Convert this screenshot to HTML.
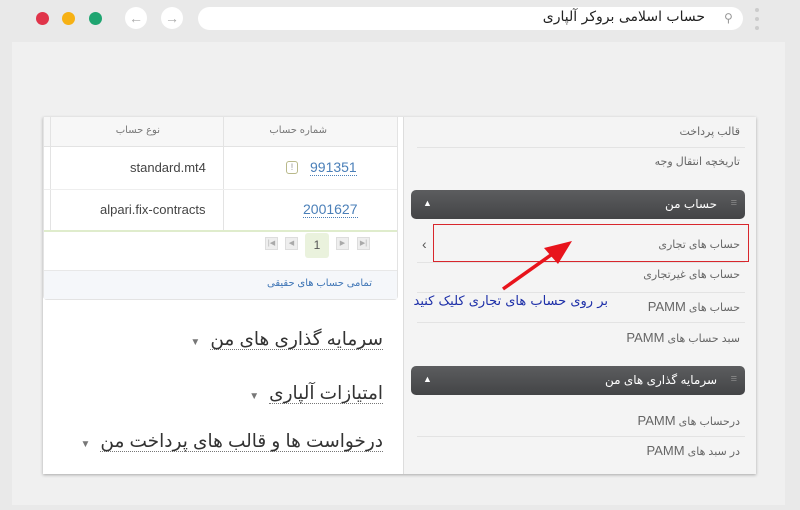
<!DOCTYPE html>
<html><head><meta charset="utf-8"><style>
*{margin:0;padding:0;box-sizing:border-box}
body{width:800px;height:510px;background:#e9e9e9;font-family:"Liberation Sans","DejaVu Sans",sans-serif;position:relative;overflow:hidden}
.a{position:absolute}
.dot{width:13px;height:13px;border-radius:50%;top:12px}
.circ{width:22px;height:22px;border-radius:50%;background:#fff;top:7px;color:#aaa;font-size:14px;text-align:center;line-height:22px}
.rt{direction:rtl;text-align:right;white-space:nowrap}
.item{right:60px;font-size:11px;color:#666}
.sep{left:417px;width:328px;height:1px;background:#e3e3e3}
.bar{left:411px;width:334px;height:29px;background:linear-gradient(#5c5d5f,#434446);border-radius:5px;color:#fff;font-size:12px}
.h{font-size:18.5px;color:#333;line-height:22px}
.h u{text-decoration:none;border-bottom:1px dotted #777}
.tri{font-size:10px;color:#777;margin-right:10px}
</style></head><body>
<div class="a dot" style="left:36px;background:#e0344a"></div>
<div class="a dot" style="left:62px;background:#f6b114"></div>
<div class="a dot" style="left:89px;background:#1fa571"></div>
<div class="a circ" style="left:125px">&#8592;</div>
<div class="a circ" style="left:161px">&#8594;</div>
<div class="a" style="left:198px;top:7px;width:545px;height:23px;background:#fff;border-radius:12px"></div>
<div class="a rt" style="right:95px;top:9px;font-size:14px;color:#222;font-family:'DejaVu Sans',sans-serif">حساب اسلامی بروکر آلپاری</div>
<div class="a" style="left:724px;top:11px;font-size:12px;color:#999">&#9906;</div>
<div class="a" style="left:755px;top:8px;width:4px;height:4px;border-radius:50%;background:#ccc"></div>
<div class="a" style="left:755px;top:17px;width:4px;height:4px;border-radius:50%;background:#ccc"></div>
<div class="a" style="left:755px;top:26px;width:4px;height:4px;border-radius:50%;background:#ccc"></div>
<div class="a" style="left:12px;top:42px;width:773px;height:463px;background:#f0f0f0"></div>
<div class="a" style="left:43px;top:117px;width:713px;height:357px;background:#fff;box-shadow:0 1px 3px rgba(0,0,0,.3)"></div>
<div class="a" style="left:403px;top:117px;width:353px;height:357px;background:#f4f4f4;border-left:1px solid #ddd"></div>
<div class="a" style="left:43px;top:117px;width:355px;height:183px;border:1px solid #e3e3e3;border-top:none;border-radius:0 0 4px 4px;background:#fff"></div>
<div class="a" style="left:44px;top:117px;width:353px;height:30px;background:#f7f7f7;border-bottom:1px solid #e3e3e3"></div>
<div class="a" style="left:50px;top:117px;width:1px;height:113px;background:#e3e3e3"></div>
<div class="a" style="left:223px;top:117px;width:1px;height:113px;background:#e3e3e3"></div>
<div class="a rt" style="right:473px;top:125px;font-size:10px;color:#777">شماره حساب</div>
<div class="a rt" style="right:640px;top:125px;font-size:10px;color:#777">نوع حساب</div>
<div class="a" style="left:44px;top:189px;width:353px;height:1px;background:#eee"></div>
<div class="a" style="left:44px;top:230px;width:353px;height:2px;background:#dfeccc"></div>
<div class="a" style="left:310px;top:159px;font-size:14px;color:#4a7fb8;border-bottom:1px dotted #4a7fb8">991351</div>
<div class="a" style="left:286px;top:161px;width:12px;height:13px;border:1px solid #b9b98a;border-radius:3px;font-size:9px;color:#999;text-align:center;line-height:11px">!</div>
<div class="a" style="left:303px;top:201px;font-size:14px;color:#4a7fb8;border-bottom:1px dotted #4a7fb8">2001627</div>
<div class="a" style="left:130px;top:160px;font-size:13px;color:#444">standard.mt4</div>
<div class="a" style="left:100px;top:202px;font-size:13px;color:#444">alpari.fix-contracts</div>
<div class="a" style="left:265px;top:237px;width:13px;height:13px;background:#eee;border:1px solid #ddd;font-size:7px;color:#aaa;text-align:center;line-height:11px">|◀</div>
<div class="a" style="left:285px;top:237px;width:13px;height:13px;background:#eee;border:1px solid #ddd;font-size:7px;color:#aaa;text-align:center;line-height:11px">◀</div>
<div class="a" style="left:305px;top:233px;width:24px;height:25px;background:#eaf2dd;border-radius:3px;font-size:12px;color:#555;text-align:center;line-height:25px">1</div>
<div class="a" style="left:336px;top:237px;width:13px;height:13px;background:#eee;border:1px solid #ddd;font-size:7px;color:#aaa;text-align:center;line-height:11px">▶</div>
<div class="a" style="left:357px;top:237px;width:13px;height:13px;background:#eee;border:1px solid #ddd;font-size:7px;color:#aaa;text-align:center;line-height:11px">▶|</div>
<div class="a" style="left:44px;top:270px;width:353px;height:29px;background:#f5f7fa;border-top:1px solid #e8e8e8"></div>
<div class="a rt" style="right:428px;top:278px;font-size:10px;color:#3d74b5">تمامی حساب های حقیقی</div>
<div class="a rt h" style="right:417px;top:328px"><u>سرمایه گذاری های من</u><span class="tri">▼</span></div>
<div class="a rt h" style="right:417px;top:382px"><u>امتیازات آلپاری</u><span class="tri">▼</span></div>
<div class="a rt h" style="right:417px;top:430px"><u>درخواست ها و قالب های پرداخت من</u><span class="tri">▼</span></div>
<div class="a rt item" style="top:125px">قالب پرداخت</div>
<div class="a sep" style="top:147px"></div>
<div class="a rt item" style="top:155px">تاریخچه انتقال وجه</div>
<div class="a bar" style="top:190px"><span class="a" style="left:12px;top:8px;font-size:9px">▲</span><span class="a rt" style="right:28px;top:7px">حساب من</span><span class="a" style="right:8px;top:7px;color:#888;font-size:11px">≡</span></div>
<div class="a rt item" style="top:238px">حساب های تجاری</div>
<div class="a" style="left:422px;top:236px;font-size:14px;color:#555">‹</div>
<div class="a" style="left:433px;top:224px;width:316px;height:38px;border:1.5px solid #d8262c"></div>
<div class="a sep" style="top:262px"></div>
<div class="a rt item" style="top:268px">حساب های غیرتجاری</div>
<div class="a sep" style="top:292px"></div>
<div class="a rt item" style="top:299px">حساب های <span style="font-size:13px">PAMM</span></div>
<div class="a sep" style="top:322px"></div>
<div class="a rt item" style="top:330px">سبد حساب های <span style="font-size:13px">PAMM</span></div>
<div class="a bar" style="top:366px"><span class="a" style="left:12px;top:8px;font-size:9px">▲</span><span class="a rt" style="right:28px;top:7px">سرمایه گذاری های من</span><span class="a" style="right:8px;top:7px;color:#888;font-size:11px">≡</span></div>
<div class="a rt item" style="top:413px">درحساب های <span style="font-size:13px">PAMM</span></div>
<div class="a sep" style="top:436px"></div>
<div class="a rt item" style="top:443px">در سبد های <span style="font-size:13px">PAMM</span></div>
<div class="a rt" style="right:192px;top:294px;font-size:13px;color:#1d2fa8;font-family:'DejaVu Sans',sans-serif">بر روی حساب های تجاری کلیک کنید</div>
<svg class="a" style="left:0;top:0" width="800" height="510"><line x1="503" y1="289" x2="558" y2="250" stroke="#e8141c" stroke-width="3.5"/><polygon points="572,241 544,248 558,264" fill="#e8141c"/></svg>
</body></html>
